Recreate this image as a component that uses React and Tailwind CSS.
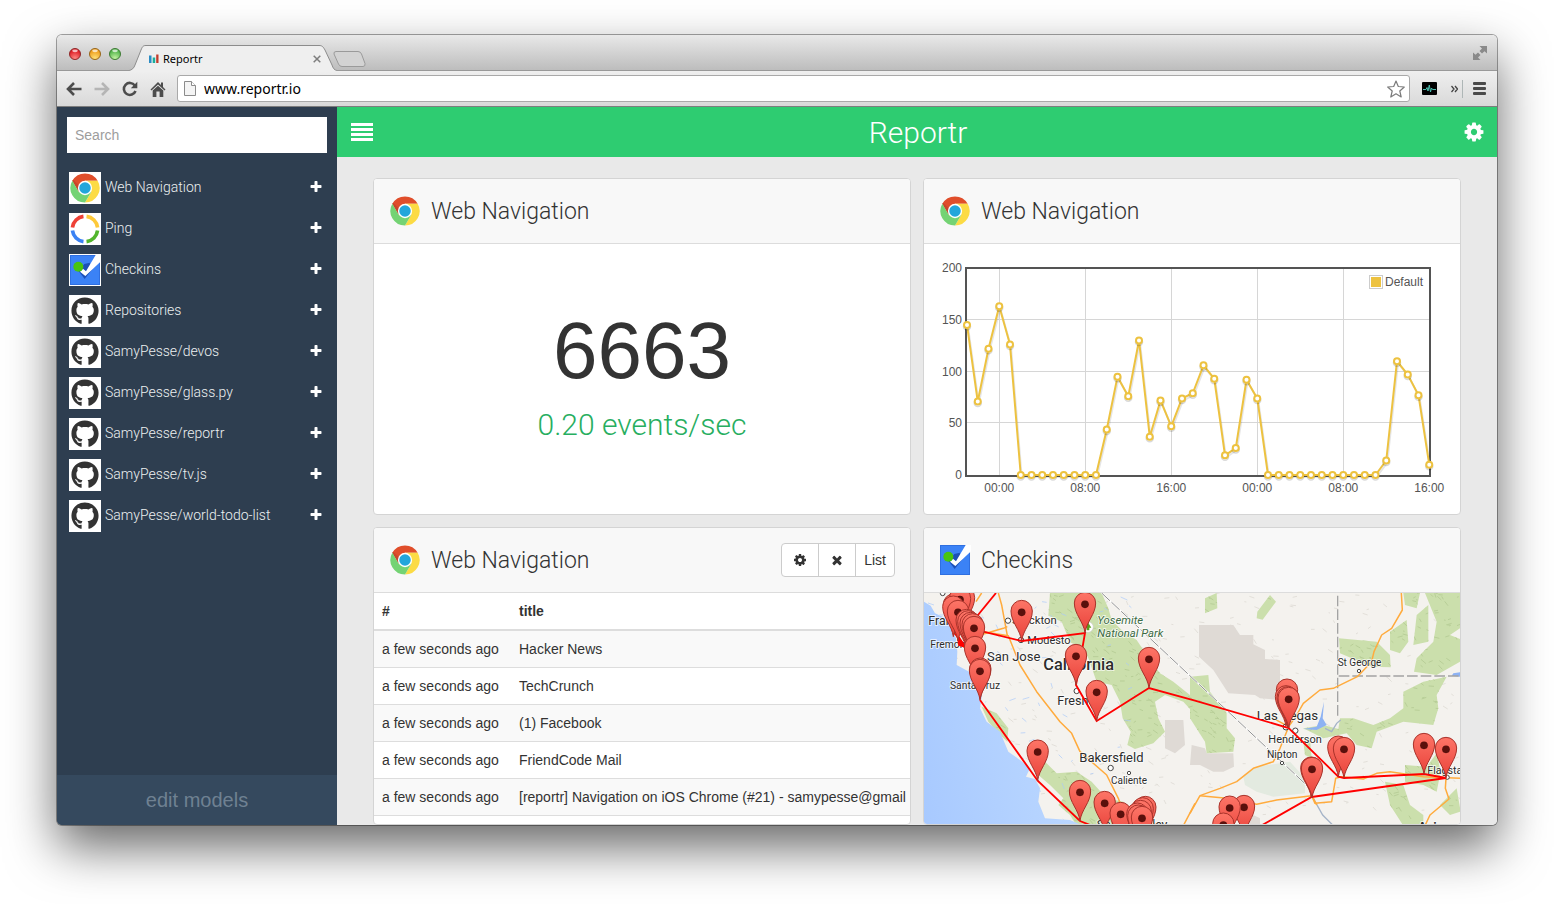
import React from "react";
import { FaGithub } from "react-icons/fa";

const COG =
  "M1152 896q0-106-75-181t-181-75-181 75-75 181 75 181 181 75 181-75 75-181zm512-109v222q0 12-8 23t-20 13l-185 28q-19 54-39 91 35 50 107 138 10 12 10 25t-9 23q-27 37-99 108t-94 71q-12 0-26-9l-138-108q-44 23-91 38-16 136-29 186-7 28-36 28h-222q-14 0-24.5-8.5t-11.5-21.5l-28-184q-49-16-90-37l-141 107q-10 9-25 9-14 0-25-11-126-114-165-168-7-10-7-23 0-12 8-23 15-21 51-66.5t54-70.5q-27-50-41-99l-183-27q-13-2-21-12.5t-8-23.5v-222q0-12 8-23t19-13l186-28q14-46 39-92-40-57-107-138-10-12-10-24 0-10 9-23 26-36 98.5-107.5t94.5-71.5q13 0 26 10l138 107q44-23 91-38 16-136 29-186 7-28 36-28h222q14 0 24.5 8.5t11.5 21.5l28 184q49 16 90 37l142-107q9-9 24-9 13 0 25 10 129 119 165 170 7 8 7 22 0 12-8 23-15 21-51 66.5t-54 70.5q26 50 41 98l183 28q13 2 21 12.5t8 23.5z";
const TIMES =
  "M1490 1322q0 40-28 68l-136 136q-28 28-68 28t-68-28l-294-294-294 294q-28 28-68 28t-68-28l-136-136q-28-28-28-68t28-68l294-294-294-294q-28-28-28-68t28-68l136-136q28-28 68-28t68 28l294 294 294-294q28-28 68-28t68 28l136 136q28 28 28 68t-28 68l-294 294 294 294q28 28 28 68z";
const PLUS =
  "M1600 736v192q0 40-28 68t-68 28h-416v416q0 40-28 68t-68 28h-192q-40 0-68-28t-28-68v-416h-416q-40 0-68-28t-28-68v-192q0-40 28-68t68-28h416v-416q0-40 28-68t68-28h192q40 0 68 28t28 68v416h416q40 0 68 28t28 68z";

function Glyph({ d, className }) {
  return (
    <svg viewBox="0 0 1792 1792" className={className} fill="currentColor" aria-hidden="true">
      <path d={d} />
    </svg>
  );
}

function ChromeIcon() {
  return (
    <svg viewBox="-46 -46 92 92" className="size-8 shrink-0" aria-hidden="true">
      <path d="M36.4 -21A42 42 0 0 0 -36.4 -21L-18.2 10.5L0 0V-21Z" fill="#e04e2b" />
      <path d="M-36.4 -21L-18.2 10.5L-10 0L-34 -24Z" fill="#c9452a" />
      <path d="M36.4 -21A42 42 0 0 1 0 42L18.2 10.5L0 0V-21Z" fill="#fcdb45" />
      <path d="M0 42A42 42 0 0 1 -36.4 -21L-18.2 10.5L0 0L18.2 10.5Z" fill="#74d374" />
      <circle r="20.5" fill="#fff" />
      <circle r="16.5" fill="#22a6db" />
    </svg>
  );
}

function PingIcon() {
  return (
    <svg viewBox="0 0 96 96" className="size-8 shrink-0" fill="none" strokeWidth="11" aria-hidden="true">
      <path d="M10.3 43.4A38 38 0 0 1 43.4 10.3" stroke="#ee4137" />
      <path d="M52.6 10.3A38 38 0 0 1 85.7 43.4" stroke="#fdc93a" />
      <path d="M85.7 52.6A38 38 0 0 1 52.6 85.7" stroke="#52b52c" />
      <path d="M43.4 85.7A38 38 0 0 1 10.3 52.6" stroke="#3b82f3" />
    </svg>
  );
}

function CheckinIcon() {
  return (
    <svg viewBox="0 0 96 96" className="size-8 shrink-0" aria-hidden="true">
      <rect x="3" y="3" width="90" height="90" fill="#2f6fe0" />
      <rect x="6" y="6" width="84" height="84" fill="#3b82f6" />
      <path d="M28 50L47 75L70 46L62 26L46 30Z" fill="#1c50b8" />
      <path d="M33 53L42 44L51 52L80 3H96V22L49 66Z" fill="#fff" />
      <circle cx="28" cy="38" r="15" fill="#48c410" />
    </svg>
  );
}

function GithubIcon() {
  return (
    <span className="flex size-8 shrink-0 items-center justify-center">
      <FaGithub className="size-7 text-[#333]" />
    </span>
  );
}

const MODELS = [
  ["Web Navigation", ChromeIcon],
  ["Ping", PingIcon],
  ["Checkins", CheckinIcon],
  ["Repositories", GithubIcon],
  ["SamyPesse/devos", GithubIcon],
  ["SamyPesse/glass.py", GithubIcon],
  ["SamyPesse/reportr", GithubIcon],
  ["SamyPesse/tv.js", GithubIcon],
  ["SamyPesse/world-todo-list", GithubIcon],
];

function TrafficLight({ label, from, to, edge }) {
  const id = "light-" + label;
  return (
    <button aria-label={label} className="size-3">
      <svg viewBox="0 0 12 12" className="size-3">
        <defs>
          <radialGradient id={id} cx="50%" cy="90%" r="75%">
            <stop offset="0" stopColor={from} />
            <stop offset="1" stopColor={to} />
          </radialGradient>
        </defs>
        <circle cx="6" cy="6" r="5.5" fill={"url(#" + id + ")"} stroke={edge} />
        <ellipse cx="6" cy="2.800" rx="2.800" ry="1.400" fill="#fff" opacity=".7" />
      </svg>
    </button>
  );
}

function TitleBar() {
  return (
    <div className="flex h-9 items-end border-b border-[#999] bg-linear-to-b from-[#e9e9e9] to-[#bdbdbd] pl-3">
      <div className="flex gap-2 self-center pt-0.5">
        <TrafficLight label="Close" from="#ff8a84" to="#dc1820" edge="#8d2a2a" />
        <TrafficLight label="Minimize" from="#ffe27a" to="#ee9a16" edge="#96661c" />
        <TrafficLight label="Zoom" from="#c5f5a4" to="#4cb046" edge="#3f7a35" />
      </div>
      <div className="relative -mb-px ml-2 flex h-[26px] w-[208px] items-center pt-0.5 pr-4 pl-5">
        <svg viewBox="0 0 208 26" className="absolute inset-0 size-full" preserveAspectRatio="none" aria-hidden="true">
          <path d="M0 26V25C3 25 5 23 6 20L12 5C13.500 1.500 14 .5 17 .5H190C193 .5 194 1.500 196 5L203 20C204 23 205 25 208 25V26Z" fill="#efefef" />
          <path d="M0 25.500C3 25 5 23 6 20L12 5C13.500 1.500 14 .5 17 .5H190C193 .5 194 1.500 196 5L203 20C204 23 205 25 208 25.500" fill="none" stroke="#8c8c8c" />
        </svg>
        <svg viewBox="0 0 10 10" className="relative size-2.5 shrink-0" aria-hidden="true">
          <path d="M0 1.500h2.500v7.500h-2.500z" fill="#2b8cc4" />
          <path d="M3.700 3.500h2.500v5.500h-2.500z" fill="#1aae9c" />
          <path d="M7.200 .5h2.300v8.500h-2.300z" fill="#c33b2b" />
        </svg>
        <span className="relative ml-1 flex-1 font-['Noto_Sans',sans-serif] text-[11px] leading-4 text-black">Reportr</span>
        <button aria-label="Close tab" className="relative">
          <svg viewBox="0 0 8 8" className="size-2" stroke="#7d7d7d" strokeWidth="1.500" aria-hidden="true">
            <path d="M.7 .7L7.300 7.300M7.300 .7L.7 7.300" />
          </svg>
        </button>
      </div>
      <button aria-label="New tab" className="-ml-1 mb-[3px] h-4">
        <svg viewBox="0 0 33 16" className="h-4 w-[33px]" aria-hidden="true">
          <path d="M3 .5H25Q27.500 .5 28.500 3L32 12.500Q32.500 15.500 30 15.500H9Q6.500 15.500 5.500 13L1 3Q.5 .5 3 .5Z" fill="#d3d3d3" stroke="#9a9a9a" />
        </svg>
      </button>
      <button aria-label="Full screen" className="mr-2.5 mb-2.5 ml-auto">
        <svg viewBox="0 0 14 14" className="size-3.5" fill="#8a8a8a" aria-hidden="true">
          <path d="M6.500 0H14V7.500L11.500 5.300L9 7.500L6.500 5L9 2.500Z" />
          <path d="M7.500 14H0V6.500L2.500 8.700L5 6.500L7.500 9L5 11.500Z" />
        </svg>
      </button>
    </div>
  );
}

function AddressBar() {
  return (
    <div className="flex h-9 items-center border-b border-[#7d7d7d] bg-linear-to-b from-[#efefef] to-[#d9d9d9] pr-[11px] pl-[9px]">
      <div className="flex items-center gap-3">
        <button aria-label="Back">
          <svg viewBox="0 0 16 16" className="size-4" fill="none" stroke="#4c4c4c" strokeWidth="2.600" aria-hidden="true">
            <path d="M15.500 8H2.500M8 2L2 8L8 14" />
          </svg>
        </button>
        <button aria-label="Forward">
          <svg viewBox="0 0 16 16" className="size-4" fill="none" stroke="#b5b5b5" strokeWidth="2.600" aria-hidden="true">
            <path d="M.5 8H13.500M8 2L14 8L8 14" />
          </svg>
        </button>
        <button aria-label="Reload">
          <svg viewBox="0 0 16 16" className="size-4" fill="none" stroke="#4c4c4c" strokeWidth="2.600" aria-hidden="true">
            <path d="M12.800 4.500A6 6 0 1 0 13.500 10" />
            <path d="M15.300 .8V7.300H8.800Z" fill="#4c4c4c" stroke="none" />
          </svg>
        </button>
        <button aria-label="Home">
          <svg viewBox="0 0 16 16" className="size-4" fill="#4c4c4c" aria-hidden="true">
            <path d="M8 1L11 4V1.500H13V6L15.500 8.500L14.500 9.500L8 3.500L1.500 9.500L.5 8.500Z" />
            <path d="M8 4.800L13.300 9.600V16H9.600V10.500H6.400V16H2.700V9.600Z" />
          </svg>
        </button>
      </div>
      <div className="ml-[11px] flex h-[27px] flex-1 items-center rounded-[3px] border border-[#a9a9a9] bg-white px-1.5">
        <svg viewBox="0 0 12 15" className="h-[15px] w-3" fill="#f4f4f4" stroke="#8b8b8b" aria-hidden="true">
          <path d="M.5 .5H7.500L11.500 4.500V14.500H.5Z" />
          <path d="M7.500 .5V4.500H11.500" fill="#fff" />
        </svg>
        <input
          aria-label="Address"
          defaultValue="www.reportr.io"
          className="ml-2 min-w-0 flex-1 bg-transparent font-['Noto_Sans',sans-serif] text-[14px] leading-5 text-black outline-none"
        />
        <button aria-label="Bookmark" className="-mr-0.5">
          <svg viewBox="0 0 18 18" className="size-[18px]" fill="#fff" stroke="#7b7b7b" strokeWidth="1.200" strokeLinejoin="round" aria-hidden="true">
            <path d="M9 1L11.300 6.500L17.300 7L12.800 11L14.200 17L9 13.800L3.800 17L5.200 11L.7 7L6.700 6.500Z" />
          </svg>
        </button>
      </div>
      <div className="ml-3 flex items-center">
        <svg viewBox="0 0 15 13" className="h-[13px] w-[15px]" aria-hidden="true">
          <rect width="15" height="13" rx="1" fill="#000" />
          <path d="M1 7.500H4L5 5.500L6 9L7.300 3L8.500 10L9.500 6L10.500 7.500H14" fill="none" stroke="#4cc0b0" />
        </svg>
        <button aria-label="More extensions" className="ml-3.5 border-r border-[#aeb6b6] py-px pr-1">
          <svg viewBox="0 0 7 16" className="h-4 w-[7px]" fill="none" stroke="#444" strokeWidth="1.300" aria-hidden="true">
            <path d="M.5 5L3 8L.5 11M4 5L6.500 8L4 11" />
          </svg>
        </button>
        <button aria-label="Menu" className="ml-2.5">
          <svg viewBox="0 0 13 13" className="size-[13px]" fill="#4a4a4a" aria-hidden="true">
            <rect width="13" height="3" rx="1" />
            <rect y="5" width="13" height="3" rx="1" />
            <rect y="10" width="13" height="3" rx="1" />
          </svg>
        </button>
      </div>
    </div>
  );
}

function Sidebar() {
  return (
    <aside className="flex w-[280px] shrink-0 flex-col bg-[#2e3e50]">
      <div className="p-2.5">
        <input
          type="search"
          aria-label="Search"
          placeholder="Search"
          className="h-9 w-full bg-white px-2 text-[14px] text-[#555] outline-none placeholder:text-[#9d9d9d]"
        />
      </div>
      <ul className="mt-[9px] flex flex-col gap-[9px] pr-3.5 pl-3">
        {MODELS.map(([name, Icon]) => (
          <li key={name} className="flex items-center">
            <span className="bg-white">
              <Icon />
            </span>
            <a href="#" className="ml-1 flex-1 pb-0.5 font-['Roboto','Liberation_Sans',sans-serif] text-[14px] leading-5 font-light text-[#ecf0f1]">
              {name}
            </a>
            <button aria-label={"Add " + name} className="pb-0.5 text-white">
              <Glyph d={PLUS} className="size-3.5" />
            </button>
          </li>
        ))}
      </ul>
      <button className="mt-auto h-[50px] bg-[#35495e] text-[20px] text-[#6f8192]">edit models</button>
    </aside>
  );
}

function NavBar() {
  return (
    <header className="flex h-[50px] shrink-0 items-center justify-between bg-[#2ecc71] px-3.5 text-white">
      <button aria-label="Toggle models">
        <svg viewBox="0 0 22 18" className="h-[18px] w-[22px]" fill="currentColor" aria-hidden="true">
          <path d="M0 0h22v3h-22zM0 5h22v3h-22zM0 10h22v3h-22zM0 15h22v3h-22z" />
        </svg>
      </button>
      <h1 className="pt-0.5 font-['Roboto','Liberation_Sans',sans-serif] text-[30px] leading-10 font-light">Reportr</h1>
      <button aria-label="Settings" className="-mr-0.5">
        <Glyph d={COG} className="size-[22px]" />
      </button>
    </header>
  );
}

function Card({ title, icon: Icon, actions, children }) {
  return (
    <section className="flex min-h-0 min-w-0 flex-col overflow-hidden rounded-sm border border-[#d4d4d4] bg-white">
      <div className="flex h-[65px] shrink-0 items-center border-b border-[#dcdcdc] bg-[#f8f8f8] px-[15px]">
        <Icon />
        <h2 className="ml-2.5 flex-1 pt-0.5 font-['Roboto','Liberation_Sans',sans-serif] text-[23px] leading-8 font-light text-[#333]">{title}</h2>
        {actions}
      </div>
      {children}
    </section>
  );
}

const SERIES = [
  145, 71, 122, 163, 126, 0, 0, 0, 0, 0, 0, 0, 0, 44, 95, 76, 130, 37, 72, 47, 74, 79, 106, 93, 19, 26, 92, 74, 0, 0, 0, 0,
  0, 0, 0, 0, 0, 0, 0, 14, 110, 97, 77, 10,
];
const px = (i) => 43 + i * 10.75;
const py = (v) => 231 - v * 1.035;

function Chart() {
  const points = SERIES.map((v, i) => px(i) + "," + py(v)).join(" ");
  return (
    <svg
      viewBox="0 0 536 270"
      className="w-full font-['Liberation_Sans',sans-serif]"
      role="img"
      aria-label="Web Navigation events per hour"
      fontSize="12"
      fill="#545454"
    >
      <g stroke="#d6d6d6">
        {[50, 100, 150].map((v) => (
          <path key={v} d={"M43 " + (Math.round(py(v)) - 0.5) + "H505"} />
        ))}
        {[3, 11, 19, 27, 35].map((i) => (
          <path key={i} d={"M" + (Math.floor(px(i)) + 0.5) + " 24V231"} />
        ))}
      </g>
      <rect x="42" y="24" width="464" height="208" fill="none" stroke="#545454" strokeWidth="2" />
      {[0, 50, 100, 150, 200].map((v) => (
        <text key={v} x="38" y={py(v) + 4} textAnchor="end">
          {v}
        </text>
      ))}
      {["00:00", "08:00", "16:00", "00:00", "08:00", "16:00"].map((t, i) => (
        <text key={i} x={px(3 + i * 8)} y="248" textAnchor="middle">
          {t}
        </text>
      ))}
      <polyline points={points} fill="none" stroke="#000" strokeOpacity=".1" strokeWidth="2" transform="translate(1 2)" />
      <polyline points={points} fill="none" stroke="#edc240" strokeWidth="2" strokeLinejoin="round" />
      {SERIES.map((v, i) => (
        <g key={i}>
          <circle cx={px(i)} cy={py(v) + 1.5} r="3.500" fill="none" stroke="#000" strokeOpacity=".15" strokeWidth="1.500" />
          <circle cx={px(i)} cy={py(v)} r="3" fill="#fff" stroke="#edc240" strokeWidth="2" />
        </g>
      ))}
      <rect x="445.500" y="31.500" width="13" height="13" fill="#fff" stroke="#ccc" />
      <rect x="447" y="33" width="10" height="10" fill="#edc240" />
      <text x="461" y="42">
        Default
      </text>
    </svg>
  );
}

const GREENS =
  "M390 24H545L565 70L575 105L610 140L650 165L690 225L720 265L760 290L835 350V400L790 350L735 330L705 350L715 400L735 440L700 475L645 492L622 480L632 440L608 400L600 350L575 300L530 290L505 220L490 190L450 172L425 110L385 92Z" +
  "M85 40L105 24H130L110 60ZM185 365L230 385L265 430L262 470L235 445L205 410ZM340 535L375 530L410 565L470 560L515 590L560 640L610 650L650 690L640 722H470L450 690L415 660L430 640L390 600L355 570Z" +
  "M810 275L865 270L870 320L920 385V430L945 460L940 500L860 505L855 470L810 400ZM855 40L890 24L892 70L855 85ZM1012 80L1050 30L1068 50L1028 104L1010 100Z" +
  "M1257 160L1370 170L1410 210L1412 247L1355 245L1260 205ZM1450 24H1500L1490 70L1455 60ZM1410 140L1460 105L1465 170L1440 205L1410 195ZM1490 90L1525 60L1525 170L1480 180ZM1515 24H1620V130L1590 150L1620 162V230L1550 270L1482 260L1490 220L1540 170L1550 110Z" +
  "M1150 430L1210 420L1255 432L1260 400L1300 400L1360 420L1410 400L1450 370V320L1510 290L1580 275L1550 330L1555 370L1540 420L1450 410L1370 440L1355 490L1310 480L1280 445L1210 460Z" +
  "M1455 540L1520 545L1550 505L1562 560L1550 620L1510 600L1455 590ZM1395 590L1450 600L1470 660L1510 690V722H1450L1410 660ZM1560 660L1610 610L1622 680L1590 690ZM1150 470L1170 460L1175 520L1155 510Z";

const ROADS = [
  "M190 140L265 152L300 240L350 320L420 410L455 445L480 500L560 570L595 640L612 690",
  "M235 24L245 60L262 152M185 24L168 50M180 150L250 130L262 125",
  "M825 655L790 722M745 722L700 715L610 690",
  "M1444 24L1447 75L1415 130L1385 150L1362 200L1355 230L1312 275L1240 310L1200 315L1150 355L1130 390L1106 425L1080 490L1060 530L1000 550L950 590L900 610L840 632L810 685",
  "M840 632L920 640L1010 658L1070 645L1175 632L1185 655L1235 650L1247 580L1265 575L1330 582L1370 565L1410 560L1510 575L1620 580",
  "M1578 580L1576 610L1587 642L1530 690L1515 722M1060 400L1106 425M1180 640L1190 660",
];

const RED_LINES = [
  "M125 150L228 24",
  "M150 130L305 168L495 144L468 300L530 408L687 309L825 347L1106 429L1255 575L1272 579L1512 567L1578 579L1175 636L1020 724",
  "M100 140L140 190M180 345L353 587L480 708L530 728",
];

const PINS = [
  [102, 148], [132, 128], [120, 130], [100, 155], [114, 168], [140, 195], [145, 199], [152, 204], [158, 208], [162, 216],
  [165, 276], [181, 341], [180, 345], [305, 168], [495, 144], [468, 300], [530, 408], [687, 309], [353, 587], [480, 708],
  [554, 741], [602, 774], [676, 756], [668, 760], [662, 768], [652, 776], [655, 782], [666, 786], [1101, 404], [1098, 424],
  [1103, 427], [1106, 429], [1255, 575], [1272, 579], [1512, 567], [1578, 579], [1174, 638], [1176, 639], [972, 753],
  [929, 755], [910, 806],
];

const TOWNS = [
  [264, 107, 8], [303, 165, 8], [470, 318, 8], [572, 549, 8], [627, 564, 5], [1317, 258, 5], [1098, 426, 9], [1126, 437, 8],
  [1086, 534, 5], [1582, 577, 6], [68, 25, 7],
];

const LABELS = [
  ["Francisco", 25, 119, 37], ["Fremont", 31, 190, 31], ["Stockton", 276, 118, 34], ["Modesto", 322, 176, 33],
  ["San Jose", 201, 228, 39], ["Santa Cruz", 90, 313, 31], ["Fresno", 412, 361, 38], ["Bakersfield", 478, 532, 39],
  ["Caliente", 573, 598, 30], ["Spring Valley", 530, 732, 37], ["St George", 1253, 244, 30], ["Las Vegas", 1010, 404, 40],
  ["Henderson", 1045, 475, 33], ["Nipton", 1041, 520, 31], ["Flagstaff", 1522, 566, 32],
];

function scatter(count, seed, width, length) {
  let s = seed;
  const next = () => {
    s = (s * 16807) % 2147483647;
    return s / 2147483647;
  };
  let d = "";
  for (let i = 0; i < count; i++) {
    const x = Math.round(20 + next() * width);
    const y = Math.round(24 + next() * 700);
    d += "M" + x + " " + y + "l" + Math.round(4 + next() * length) + " " + Math.round((next() - 0.3) * length * 1.6);
  }
  return d;
}
const RELIEF = scatter(1500, 77, 1600, 12);
const SLOPES = scatter(340, 1234, 1600, 12);
const STREAMS = scatter(90, 4321, 620, 16);

function CheckinMap() {
  return (
    <svg
      viewBox="0 0 536 232"
      preserveAspectRatio="xMidYMin slice"
      className="min-h-0 w-full flex-1 font-['Roboto',sans-serif]"
      role="img"
      aria-label="Map of checkins"
    >
      <defs>
        <linearGradient id="pin" x1="0" y1="0" x2="0" y2="1">
          <stop offset="0" stopColor="#fd7567" />
          <stop offset="1" stopColor="#e9423a" />
        </linearGradient>
        <linearGradient id="sea" x1="0" y1="1" x2="1" y2="0.600">
          <stop offset="0" stopColor="#a6c8ff" />
          <stop offset="1" stopColor="#bcd8ff" />
        </linearGradient>
        <clipPath id="parks">
          <path d={GREENS} />
        </clipPath>
        <clipPath id="land">
          <path d="M12 24H1622V725H480L375 700L355 650L345 580L300 530L240 440L185 330L115 240L108 160L60 90L12 50Z" />
        </clipPath>
        <path id="marker" d="M0 0C-4 -34 -32 -56 -32 -90A32 32 0 0 1 32 -90C32 -56 4 -34 0 0Z" />
      </defs>
      <g transform="matrix(.33333 0 0 .33333 -4 -8)">
        <rect x="12" y="24" width="1620" height="900" fill="#f4f2ee" />
        <path d={SLOPES} stroke="#e2dfd9" strokeWidth="3" />
        <path
          d="M837 120H940L960 150H1000V178L1035 195V222L1080 225V345L1020 340L1005 330L925 325L880 255L837 215ZM815 480L855 490L860 505H940L942 545L910 560H880L840 540H810ZM735 405H790L795 480L765 505L735 490ZM1000 690L1020 700V722H980Z"
          fill="#dfdad5"
        />
        <path d="M970 575L1010 545L1110 530L1155 580V625L1060 635L1010 620L975 600Z" fill="#e3eae0" />
        <path d={GREENS} fill="#cbdfac" />
        <g clipPath="url(#parks)">
          <path d={RELIEF} stroke="#b8ce98" strokeWidth="3" />
        </g>
        <g clipPath="url(#land)">
          <path d={STREAMS} stroke="#a9c9fb" strokeWidth="2" />
        </g>
        <path
          d="M12 50L32 62L45 85L75 98L95 135L108 160L112 200L110 240L150 262L165 290L186 330L180 370L200 410L240 440L265 500L300 525L330 550L318 575L345 582L360 610L355 650L375 700L450 705L495 724V924H12Z"
          fill="url(#sea)"
        />
        <path d="M130 60L150 100L175 150L160 160L135 110Z" fill="#b4d2ff" />
        <path d="M1150 432L1190 425L1202 395L1212 350L1208 400L1220 420L1190 435ZM1600 265L1620 262V275L1595 272Z" fill="#8db2f3" />
        <path d="M1215 430L1235 440L1250 415L1262 405M1180 640L1208 690L1240 722" fill="none" stroke="#a5b4c8" strokeWidth="4" />
        <path d="M545 24L1170 610" stroke="#fff" strokeWidth="5" />
        <path d="M545 24L1170 610" stroke="#909090" strokeWidth="3" strokeDasharray="34 6" />
        <path d="M1253 32V395M1256 273H1620" stroke="#a3a3a3" strokeWidth="4" strokeDasharray="32 9" fill="none" />
        <g fill="none" stroke="#ffab3d" strokeWidth="4.500" strokeLinejoin="round">
          {ROADS.map((d) => (
            <path key={d} d={d} />
          ))}
        </g>
        <circle cx="504" cy="126" r="16" fill="#fff" stroke="#ccc" strokeWidth="2" />
        <path d="M504 112L514 128H508V136H500V128H494Z" fill="#5a9e1f" />
        {TOWNS.map(([x, y, r]) => (
          <circle key={x + "-" + y} cx={x} cy={y} r={r} fill="#fff" stroke="#444" strokeWidth="3" />
        ))}
        <g fill="#2c2c2c" stroke="#fff" strokeWidth="5" strokeOpacity=".8" paintOrder="stroke">
          {LABELS.map(([name, x, y, size]) => (
            <text key={name} x={x} y={y} fontSize={size}>
              {name}
            </text>
          ))}
          <text x="370" y="256" fontSize="49" fontWeight="500">
            California
          </text>
          <text x="1492" y="744" fontSize="46" fontWeight="500">
            Arizona
          </text>
          <g fill="#3c6b43" fontSize="34" fontStyle="italic">
            <text x="532" y="116">
              Yosemite
            </text>
            <text x="532" y="155">
              National Park
            </text>
          </g>
        </g>
        <g fill="none" stroke="#f00" strokeWidth="5.500">
          {RED_LINES.map((d) => (
            <path key={d} d={d} />
          ))}
        </g>
        <path d="M112 150L135 185L118 180Z" fill="#f00" stroke="#f00" strokeWidth="6" />
        {PINS.map(([x, y], i) => (
          <g key={i} transform={"translate(" + x + " " + y + ")"}>
            <use href="#marker" fill="url(#pin)" stroke="#a8322a" strokeWidth="3" />
            <circle cy="-86" r="11.500" fill="#5a100c" />
          </g>
        ))}
      </g>
    </svg>
  );
}

const EVENTS = [
  "Hacker News",
  "TechCrunch",
  "(1) Facebook",
  "FriendCode Mail",
  "[reportr] Navigation on iOS Chrome (#21) - samypesse@gmail",
];

function EventTable() {
  return (
    <div className="min-h-0 flex-1 overflow-hidden">
      <table className="w-full table-fixed text-left text-[14px] leading-5 whitespace-nowrap text-[#333]">
        <thead>
          <tr className="border-b-2 border-[#ddd]">
            <th className="w-[137px] p-2 font-bold">#</th>
            <th className="py-2 pl-2 font-bold">title</th>
          </tr>
        </thead>
        <tbody>
          {EVENTS.map((title) => (
            <tr key={title} className="border-b border-[#ddd] odd:bg-[#f9f9f9]">
              <td className="p-2">a few seconds ago</td>
              <td className="py-2 pl-2">{title}</td>
            </tr>
          ))}
        </tbody>
      </table>
    </div>
  );
}

function ListActions() {
  return (
    <div className="flex h-[34px] divide-x divide-[#ccc] overflow-hidden rounded border border-[#ccc] bg-white text-[14px] text-[#333]">
      <button aria-label="Configure" className="px-[11px]">
        <Glyph d={COG} className="size-3.5" />
      </button>
      <button aria-label="Remove" className="px-[11px]">
        <Glyph d={TIMES} className="size-3.5" />
      </button>
      <button className="px-2">List</button>
    </div>
  );
}

export default function App() {
  return (
    <div className="flex h-screen flex-col bg-white px-[57px] pt-[35px] pb-[79px] font-['Liberation_Sans',Arial,sans-serif]">
      <div className="flex min-h-0 flex-1 flex-col overflow-hidden rounded-[5px] shadow-[0_0_0_1px_rgba(0,0,0,0.35),0_22px_50px_rgba(0,0,0,0.6)]">
        <TitleBar />
        <AddressBar />
        <div className="flex min-h-0 flex-1">
          <Sidebar />
          <div className="flex min-w-0 flex-1 flex-col bg-[#e9e9e9]">
            <NavBar />
            <main className="grid min-h-0 flex-1 grid-cols-2 grid-rows-[337px_minmax(0,1fr)] gap-3 px-9 pt-[21px]">
              <Card title="Web Navigation" icon={ChromeIcon}>
                <div className="flex flex-1 flex-col items-center justify-center gap-3.5 pb-0.5">
                  <div className="text-[80px] leading-[80px] text-[#333]">6663</div>
                  <div className="font-['Roboto','Liberation_Sans',sans-serif] text-[30px] leading-10 font-light text-[#27ae60]">0.20 events/sec</div>
                </div>
              </Card>
              <Card title="Web Navigation" icon={ChromeIcon}>
                <Chart />
              </Card>
              <Card title="Web Navigation" icon={ChromeIcon} actions={<ListActions />}>
                <EventTable />
              </Card>
              <Card title="Checkins" icon={CheckinIcon}>
                <CheckinMap />
              </Card>
            </main>
          </div>
        </div>
      </div>
    </div>
  );
}
